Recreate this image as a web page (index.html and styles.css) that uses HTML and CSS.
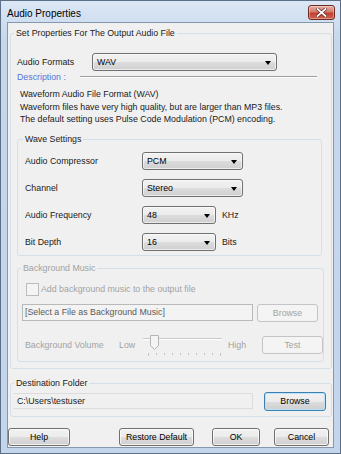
FILE: index.html
```html
<!DOCTYPE html>
<html lang="en">
<head>
    <meta charset="UTF-8">
    <title>Audio Properties</title>
    <link rel="stylesheet" href="styles.css">
</head>
<body>
    <div class="window">
        <div class="titlebar">
            <span class="title">Audio Properties</span>
            <span class="close">
                <svg width="11" height="9" viewBox="0 0 11 9">
                    <path d="M1.5 1 L9.5 8 M9.5 1 L1.5 8" stroke="#5a1f19" stroke-width="3.2" stroke-linecap="square"/>
                    <path d="M1.5 1 L9.5 8 M9.5 1 L1.5 8" stroke="#ffffff" stroke-width="1.8" stroke-linecap="square"/>
                </svg>
            </span>
        </div>

        <div class="client">
            <fieldset class="group main">
                <legend>Set Properties For The Output Audio File</legend>

                <div class="format-row">
                    <span class="format-label">Audio Formats</span>
                    <div class="combo combo-format">WAV<i class="arrow"></i></div>
                </div>

                <div class="desc-head">
                    <span class="desc-title">Description :</span>
                    <span class="rule"></span>
                </div>
                <p class="desc">
                    Waveform Audio File Format (WAV)<br>
                    Waveform files have very high quality, but are larger than MP3 files.<br>
                    The default setting uses Pulse Code Modulation (PCM) encoding.
                </p>

                <fieldset class="group wave">
                    <legend>Wave Settings</legend>
                    <div class="setting">
                        <span class="setting-label">Audio Compressor</span>
                        <div class="combo combo-long">PCM<i class="arrow"></i></div>
                    </div>
                    <div class="setting">
                        <span class="setting-label">Channel</span>
                        <div class="combo combo-long">Stereo<i class="arrow"></i></div>
                    </div>
                    <div class="setting">
                        <span class="setting-label">Audio Frequency</span>
                        <div class="combo combo-short">48<i class="arrow"></i></div>
                        <span class="unit">KHz</span>
                    </div>
                    <div class="setting">
                        <span class="setting-label">Bit Depth</span>
                        <div class="combo combo-short">16<i class="arrow"></i></div>
                        <span class="unit">Bits</span>
                    </div>
                </fieldset>

                <fieldset class="group bgm">
                    <legend>Background Music</legend>
                    <div class="check-row">
                        <span class="checkbox"></span>
                        <span>Add background music to the output file</span>
                    </div>
                    <div class="file-row">
                        <div class="textbox bgm-file">[Select a File as Background Music]</div>
                        <div class="btn btn-disabled btn-side">Browse</div>
                    </div>
                    <div class="volume-row">
                        <span class="volume-label">Background Volume</span>
                        <span class="low">Low</span>
                        <svg class="slider" width="80" height="21" viewBox="0 0 80 21">
                            <line x1="0" y1="3.5" x2="79" y2="3.5" stroke="#c9c9c9"/>
                            <line x1="0" y1="4.5" x2="79" y2="4.5" stroke="#ffffff"/>
                            <path d="M7.5 0.5 H15.5 V10.5 L11.5 14.5 L7.5 10.5 Z" fill="#f4f4f4" stroke="#b4b4b4"/>
                            <g stroke="#c4c4c4">
                                <line x1="5.5" y1="18" x2="5.5" y2="21"/>
                                <line x1="13.5" y1="18" x2="13.5" y2="20"/>
                                <line x1="21.5" y1="18" x2="21.5" y2="20"/>
                                <line x1="29.5" y1="18" x2="29.5" y2="20"/>
                                <line x1="37.5" y1="18" x2="37.5" y2="20"/>
                                <line x1="45.5" y1="18" x2="45.5" y2="20"/>
                                <line x1="53.5" y1="18" x2="53.5" y2="20"/>
                                <line x1="61.5" y1="18" x2="61.5" y2="20"/>
                                <line x1="69.5" y1="18" x2="69.5" y2="20"/>
                                <line x1="77.5" y1="18" x2="77.5" y2="21"/>
                            </g>
                        </svg>
                        <span class="high">High</span>
                        <div class="btn btn-disabled btn-side">Test</div>
                    </div>
                </fieldset>
            </fieldset>

            <fieldset class="group dest">
                <legend>Destination Folder</legend>
                <div class="dest-row">
                    <div class="textbox dest-path">C:\Users\testuser</div>
                    <div class="btn btn-default btn-browse">Browse</div>
                </div>
            </fieldset>

            <div class="actions">
                <div class="btn btn-help">Help</div>
                <div class="btn btn-restore">Restore Default</div>
                <div class="btn btn-ok">OK</div>
                <div class="btn btn-cancel">Cancel</div>
            </div>
        </div>
    </div>
</body>
</html>
```

FILE: styles.css
```css
* {
    box-sizing: border-box;
}
body {
    margin: 0;
    font-family: "Liberation Sans", Arial, sans-serif;
    font-size: 8.8px;
    color: #1a1a1a;
    background: #fff;
}
.window {
    width: 341px;
    height: 454px;
    border: 1px solid #5d6f86;
    background: linear-gradient(#dbe7f5, #c6d7ec 40px, #c3d5eb);
    display: flex;
    flex-direction: column;
}
.titlebar {
    height: 21px;
    display: flex;
    justify-content: space-between;
    align-items: flex-start;
    padding: 0 5px 0 6px;
}
.title {
    padding-top: 6px;
    font-size: 10px;
    line-height: 14px;
    color: #000;
}
.close {
    margin-top: 4px;
    width: 27px;
    height: 15px;
    border: 1px solid #6e2a22;
    border-radius: 3px;
    background: linear-gradient(#e8b0a6, #d47a6c 45%, #c2412f 55%, #d1634f);
    box-shadow: inset 0 0 0 1px rgba(255, 255, 255, 0.35);
    display: flex;
    align-items: center;
    justify-content: center;
}
.client {
    margin: 0 6px;
    width: 327px;
    height: 426px;
    border: 1px solid #8797ad;
    background: #f0f0f0;
}

/* group boxes */
.group {
    border: 1px solid #d5dfe5;
    border-radius: 3px;
    padding: 0;
    margin: 0;
    min-width: 0;
}
.group legend {
    padding: 0 2px;
    margin-left: 3px;
    line-height: 13px;
}
.main {
    margin: 4px 0 0 2px;
    width: 322px;
    padding-bottom: 6px;
}

.format-row {
    display: flex;
    align-items: center;
    margin-top: 13px;
    padding-left: 6px;
}
.format-label {
    width: 75px;
}
.combo {
    position: relative;
    height: 18px;
    line-height: 16px;
    padding-left: 4px;
    border: 1px solid #707070;
    border-radius: 3px;
    background: linear-gradient(#f2f2f2, #ebebeb 50%, #dddddd 50%, #cfcfcf);
    box-shadow: inset 0 0 0 1px rgba(255, 255, 255, 0.6);
    color: #000;
}
.arrow {
    position: absolute;
    right: 5px;
    top: 7px;
    border-left: 3.5px solid transparent;
    border-right: 3.5px solid transparent;
    border-top: 4px solid #000;
}
.combo-format {
    width: 185px;
}
.desc-head {
    display: flex;
    align-items: center;
    padding-left: 6px;
    line-height: 12px;
}
.desc-title {
    width: 63px;
    color: #5574d8;
}
.rule {
    width: 237px;
    height: 2px;
    margin-top: -1px;
    border-top: 1px solid #a0a0a0;
    border-bottom: 1px solid #ffffff;
}
.desc {
    margin: 5px 0 0;
    padding-left: 9px;
    line-height: 12.5px;
}

.wave {
    margin: 7px 0 0 6px;
    width: 305px;
    padding: 0 0 4px 7px;
}
.wave legend {
    margin-left: -2px;
}
.setting {
    display: flex;
    align-items: center;
    margin-top: 9px;
}
.setting:first-of-type {
    margin-top: 6px;
}
.setting-label {
    width: 117px;
}
.combo-long {
    width: 101px;
}
.combo-short {
    width: 74px;
}
.unit {
    margin-left: 6px;
}

.bgm {
    margin: 6px 0 0 6px;
    width: 307px;
    padding: 0 0 5px 0;
    color: #a3a3a3;
}
.check-row {
    display: flex;
    align-items: center;
    margin-top: 8px;
    padding-left: 8px;
}
.checkbox {
    width: 13px;
    height: 13px;
    margin-right: 2px;
    border: 1px solid #bcbcbc;
    background: #f4f4f4;
}
.file-row {
    display: flex;
    align-items: center;
    margin-top: 8px;
    padding-left: 4px;
}
.textbox {
    height: 17px;
    line-height: 15px;
    padding-left: 2px;
    white-space: nowrap;
}
.bgm-file {
    width: 231px;
    border: 1px solid #b9b9b9;
    background: #f3f3f3;
    color: #5a5a5a;
}
.btn {
    height: 18px;
    line-height: 16px;
    text-align: center;
    border: 1px solid #707070;
    border-radius: 3px;
    background: linear-gradient(#f2f2f2, #ebebeb 50%, #dddddd 50%, #cfcfcf);
    box-shadow: inset 0 0 0 1px rgba(255, 255, 255, 0.7);
    color: #000;
}
.btn-disabled {
    border-color: #c4c4c4;
    background: #f4f4f4;
    box-shadow: none;
    color: #a3a3a3;
}
.btn-side {
    width: 61px;
    margin-left: 4px;
}
.volume-row {
    display: flex;
    align-items: center;
    margin-top: 12px;
    padding-left: 7px;
}
.volume-label {
    width: 94px;
}
.low {
    width: 24px;
}
.slider {
    margin-top: 1px;
}
.high {
    width: 35px;
    margin-left: 5px;
}
.volume-row .btn-side {
    margin-left: -1px;
}

.dest {
    margin: 8px 0 0 2px;
    width: 322px;
    padding: 0 0 5px 0;
}
.dest-row {
    display: flex;
    align-items: center;
    margin-top: 2px;
    padding-left: 2px;
}
.dest-path {
    width: 240px;
    height: 16px;
    padding-left: 3px;
    border: 1px solid #dcdcdc;
    border-left-color: transparent;
}
.btn-default {
    border-color: #3c7fb1;
    box-shadow: inset 0 0 0 1px #b9e2fb;
}
.btn-browse {
    width: 62px;
    height: 19px;
    margin-left: 11px;
}

.actions {
    display: flex;
    margin-top: 11px;
}
.btn-help {
    width: 62px;
}
.btn-restore {
    width: 75px;
    margin-left: 49px;
}
.btn-ok {
    width: 48px;
    margin-left: 18px;
}
.btn-cancel {
    width: 55px;
    margin-left: 14px;
}
```
